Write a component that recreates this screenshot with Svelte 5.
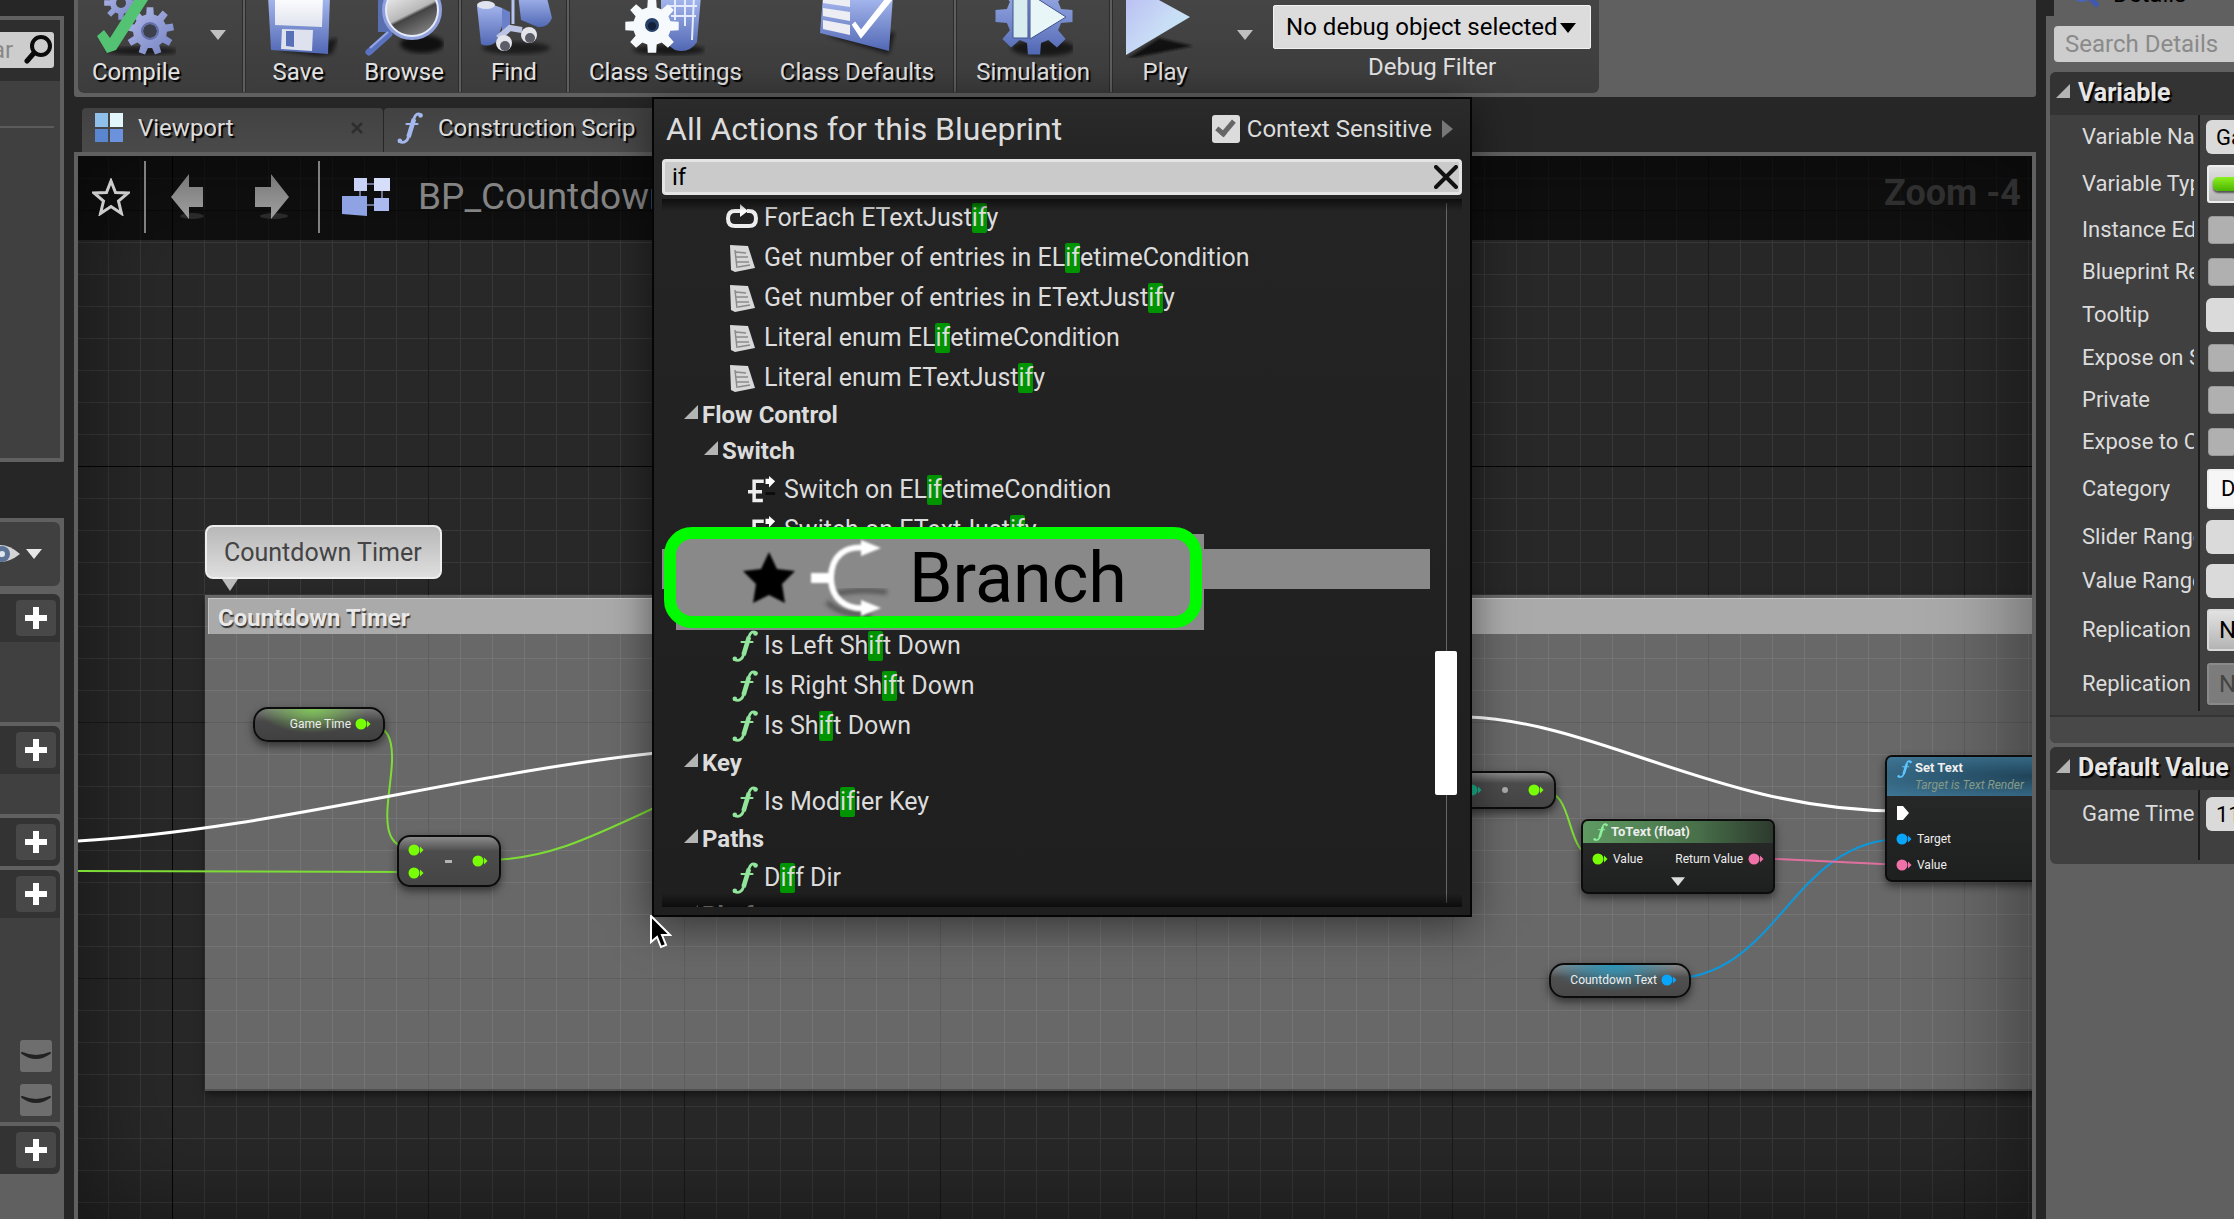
<script>
  let query = $state('if');
  let contextSensitive = $state(true);

  const sections = [
    { body: 80 },
    { body: 40 },
    { body: 0 },
    { body: 204, eyes: 2 },
    { body: 0 }
  ];

  const actions = [
    { kind: 'item', icon: 'loop', level: 2, text: ['ForEach ETextJust', 'y'] },
    { kind: 'item', icon: 'enum', level: 2, text: ['Get number of entries in EL', 'etimeCondition'] },
    { kind: 'item', icon: 'enum', level: 2, text: ['Get number of entries in ETextJust', 'y'] },
    { kind: 'item', icon: 'enum', level: 2, text: ['Literal enum EL', 'etimeCondition'] },
    { kind: 'item', icon: 'enum', level: 2, text: ['Literal enum ETextJust', 'y'] },
    { kind: 'group', level: 1, name: 'Flow Control' },
    { kind: 'group', level: 2, name: 'Switch' },
    { kind: 'item', icon: 'switch', level: 3, text: ['Switch on EL', 'etimeCondition'] },
    { kind: 'item', icon: 'switch', level: 3, text: ['Switch on ETextJust', 'y'] },
    { kind: 'selected' },
    { kind: 'item', icon: 'func', level: 2, text: ['Is Left Sh', 't Down'] },
    { kind: 'item', icon: 'func', level: 2, text: ['Is Right Sh', 't Down'] },
    { kind: 'item', icon: 'func', level: 2, text: ['Is Sh', 't Down'] },
    { kind: 'group', level: 1, name: 'Key' },
    { kind: 'item', icon: 'func', level: 2, text: ['Is Mod', 'ier Key'] },
    { kind: 'group', level: 1, name: 'Paths' },
    { kind: 'item', icon: 'func', level: 2, text: ['D', 'f Dir'] },
    { kind: 'group', level: 1, name: 'Platform' }
  ];

  const properties = [
    { id: 'var-name', label: 'Variable Name', type: 'text', value: 'Game Time', size: 'h44' },
    { id: 'var-type', label: 'Variable Type', type: 'pill', size: 'h50' },
    { id: 'instance', label: 'Instance Editable', type: 'check', size: 'h42' },
    { id: 'readonly', label: 'Blueprint Read Only', type: 'check', size: 'h42' },
    { id: 'tooltip', label: 'Tooltip', type: 'text', value: '', size: 'h44' },
    { id: 'spawn', label: 'Expose on Spawn', type: 'check', size: 'h42' },
    { id: 'private', label: 'Private', type: 'check', size: 'h42' },
    { id: 'cinematics', label: 'Expose to Cinematics', type: 'check', size: 'h42' },
    { id: 'category', label: 'Category', type: 'combo', value: 'Default', size: 'h52' },
    { id: 'slider', label: 'Slider Range', type: 'text', value: '', size: 'h44' },
    { id: 'range', label: 'Value Range', type: 'text', value: '', size: 'h44' },
    { id: 'replication', label: 'Replication', type: 'select', value: 'None', size: 'h54' },
    { id: 'condition', label: 'Replication Condition', type: 'select', value: 'None', size: 'h54', disabled: true }
  ];

  // Outline of a cog with n teeth between the inner and outer radius.
  function gear(cx, cy, inner, outer, n) {
    const pts = [];
    const step = (Math.PI * 2) / n;
    for (let i = 0; i < n; i++) {
      const a = i * step - Math.PI / 2;
      for (const [r, k] of [[inner, -0.32], [outer, -0.2], [outer, 0.2], [inner, 0.32]]) {
        pts.push(`${(cx + r * Math.cos(a + k * step)).toFixed(1)},${(cy + r * Math.sin(a + k * step)).toFixed(1)}`);
      }
    }
    return pts.join(' ');
  }
</script>

{#snippet func(cls)}
  <svg class={cls} viewBox="0 0 26 32" aria-hidden="true">
    <g fill="none" stroke="currentColor" stroke-linecap="round">
      <path d="M24 3C21 .8 18.300 2 17 6.500L11.500 25C10.200 29.500 6.500 31.500 2.500 29.500" stroke-width="2.800" />
      <path d="M17 7L11.500 25" stroke-width="4.600" stroke-linecap="butt" />
      <path d="M9.500 12H20.500" stroke-width="2.200" />
    </g>
    <circle cx="23.500" cy="3.500" r="2.300" fill="currentColor" />
    <circle cx="2.800" cy="28.800" r="2.300" fill="currentColor" />
  </svg>
{/snippet}

{#snippet pin(color)}
  <svg class="pin" viewBox="0 0 16 12" aria-hidden="true">
    <circle cx="6" cy="6" r="5.500" fill={color} />
    <path d="M12 2.500L15.500 6L12 9.500Z" fill={color} />
  </svg>
{/snippet}

{#snippet down(cls)}
  <svg class={cls} viewBox="0 0 16 10" aria-hidden="true"><path d="M0 0H16L8 10Z" fill="currentColor" /></svg>
{/snippet}

{#snippet expander()}
  <svg class="expander" viewBox="0 0 14 14" aria-hidden="true"><path d="M14 0V14H0Z" fill="#b4b4b4" /></svg>
{/snippet}

{#snippet property(p)}
  <div class="prop {p.size}">
    <label for={p.id}>{p.label}</label>
    <div class="value">
      {#if p.type === 'check'}
        <input id={p.id} type="checkbox" />
      {:else if p.type === 'pill'}
        <button id={p.id} class="type" aria-label="Float"><span></span></button>
      {:else if p.type === 'combo' || p.type === 'select'}
        <select id={p.id} class={p.type} disabled={p.disabled}><option>{p.value}</option></select>
      {:else}
        <input id={p.id} type="text" value={p.value} />
      {/if}
    </div>
  </div>
{/snippet}

<div class="app">
  <svg class="defs" aria-hidden="true">
    <defs>
      <linearGradient id="blue" x1="0" y1="0" x2="0" y2="1"><stop offset="0" stop-color="#a9baf0" /><stop offset="1" stop-color="#5168b4" /></linearGradient>
      <linearGradient id="steel" x1="0" y1="0" x2="1" y2="1"><stop offset="0" stop-color="#b3bbec" /><stop offset="1" stop-color="#7482c0" /></linearGradient>
      <linearGradient id="paper" x1="0" y1="0" x2="0" y2="1"><stop offset="0" stop-color="#fff" /><stop offset="1" stop-color="#dfe3ee" /></linearGradient>
      <linearGradient id="play" x1="0" y1="0" x2="1" y2="1"><stop offset="0" stop-color="#b8b9f2" /><stop offset=".6" stop-color="#c9def6" /><stop offset="1" stop-color="#bdeef0" /></linearGradient>
      <linearGradient id="lens" x1=".2" y1="0" x2=".7" y2="1"><stop offset="0" stop-color="#fff" /><stop offset=".55" stop-color="#b8b8b8" /><stop offset=".6" stop-color="#444" /><stop offset="1" stop-color="#888" /></linearGradient>
      <linearGradient id="arrow" x1="0" y1="0" x2="0" y2="1"><stop offset="0" stop-color="#777" /><stop offset="1" stop-color="#a0a0a0" /></linearGradient>
      <filter id="soft"><feGaussianBlur stdDeviation="2" /></filter>
      <filter id="glow"><feGaussianBlur stdDeviation="1" /></filter>
    </defs>
  </svg>

  <aside class="left">
    <div class="components">
      <div class="find">
        <div class="findbox">
          <span>ar</span>
          <svg viewBox="0 0 30 30" aria-hidden="true"><circle cx="17" cy="11" r="9" fill="none" stroke="#0b0b0b" stroke-width="4" /><path d="M10 18L3 26" stroke="#0b0b0b" stroke-width="5" stroke-linecap="round" /></svg>
        </div>
      </div>
      <hr />
    </div>
    <div class="members">
      <div class="viewopts">
        <svg class="eye" viewBox="0 0 40 24" aria-hidden="true"><path d="M0 12Q20 -6 40 12Q20 28 0 12Z" fill="#d5d5d5" /><circle cx="22" cy="12" r="8" fill="#5d7396" /><circle cx="22" cy="12" r="3" fill="#dfe6ee" /></svg>
        {@render down('caret light')}
      </div>
      {#each sections as s}
        <section class:open={s.body > 0}>
          <header>
            <button class="plus" aria-label="Add"><svg viewBox="0 0 22 22" aria-hidden="true"><path d="M11 0V22M0 11H22" stroke="#fff" stroke-width="6" /></svg></button>
          </header>
          {#if s.body}
            <div class="sbody" style="height:{s.body}px">
              {#each Array(s.eyes ?? 0) as _}
                <button class="lid" aria-label="Toggle visibility"><svg viewBox="0 0 32 32" aria-hidden="true"><path d="M2 13Q16 23 30 13Q16 19 2 13Z" fill="#222" stroke="#222" stroke-width="2" stroke-linejoin="round" /></svg></button>
              {/each}
            </div>
          {/if}
        </section>
      {/each}
    </div>
  </aside>

  <main>
    <div class="toolwrap">
      <div class="toolbar">
        <button class="tool">
          <svg viewBox="0 0 80 58" aria-hidden="true">
            <ellipse cx="46" cy="51" rx="36" ry="4" fill="#000" opacity=".6" filter="url(#soft)" />
            <polygon points={gear(25, 3, 11, 17, 8)} fill="url(#steel)" /><circle cx="25" cy="3" r="5" fill="#444" />
            <polygon points={gear(54, 31, 17, 24, 9)} fill="url(#steel)" /><circle cx="54" cy="31" r="7" fill="#3c3f4c" /><circle cx="54" cy="31" r="8" fill="none" stroke="#636ea8" stroke-width="2" />
            <path d="M1 36L8 30L14 38L42 -6L52 0L20 50L11 53Z" fill="#53c272" />
          </svg>
          <span>Compile</span>
        </button>
        <button class="drop" aria-label="Compile options">{@render down('caret')}</button>
        <i></i>
        <button class="tool">
          <svg viewBox="0 0 80 58" aria-hidden="true">
            <polygon points="20,50 80,38 74,54 60,56" fill="#000" opacity=".6" filter="url(#soft)" />
            <polygon points="10,-4 72,-4 70,54 13,50" fill="url(#blue)" />
            <polygon points="17,-4 65,-4 64,27 17,25" fill="url(#paper)" />
            <polygon points="24,29 55,30 54,51 23,49" fill="#dde2ee" />
            <polygon points="28,31 36,31 36,47 28,46" fill="#5870b8" />
          </svg>
          <span>Save</span>
        </button>
        <button class="tool">
          <svg viewBox="0 0 80 58" aria-hidden="true">
            <ellipse cx="58" cy="44" rx="22" ry="9" fill="#000" opacity=".75" filter="url(#soft)" />
            <rect x="14" y="-6" width="20" height="38" fill="#5a6fb0" />
            <path d="M25 34L5 52" stroke="#5a72c0" stroke-width="7" stroke-linecap="round" />
            <path d="M24 32L6 48" stroke="#94a7e4" stroke-width="2" />
            <circle cx="48" cy="10" r="28" fill="url(#lens)" stroke="#8fa0dc" stroke-width="4" />
            <circle cx="48" cy="10" r="26" fill="none" stroke="#e6ebfa" stroke-width="2" />
          </svg>
          <span>Browse</span>
        </button>
        <i></i>
        <button class="tool">
          <svg viewBox="0 0 80 58" aria-hidden="true">
            <ellipse cx="42" cy="48" rx="34" ry="6" fill="#000" opacity=".55" filter="url(#soft)" />
            <path d="M3 6Q8 1 14 3L28 8V26L22 42Q14 48 7 44Z" fill="url(#blue)" />
            <path d="M44 -6H72L78 18Q74 28 64 27L47 20Z" fill="url(#blue)" />
            <path d="M28 8L36 12V30L28 34Z" fill="#6a80c8" />
            <ellipse cx="12" cy="5" rx="9" ry="4" fill="#dfe4ee" />
            <path d="M39 -4V24" stroke="#b7c4f0" stroke-width="3" />
            <path d="M24 38L36 28L48 30" fill="none" stroke="#bcc6e4" stroke-width="6" />
            <circle cx="30" cy="43" r="8" fill="#e3e5ea" /><circle cx="31" cy="46" r="5" fill="#5b5e68" />
            <circle cx="55" cy="35" r="8" fill="#e3e5ea" /><circle cx="56" cy="38" r="5" fill="#5b5e68" />
          </svg>
          <span>Find</span>
        </button>
        <i></i>
        <button class="tool broad">
          <svg viewBox="0 0 80 58" aria-hidden="true">
            <ellipse cx="44" cy="50" rx="36" ry="5" fill="#000" opacity=".6" filter="url(#soft)" />
            <path d="M36 -4H76L72 42Q64 54 50 50L36 40Z" fill="url(#blue)" />
            <path d="M50 -4V20M60 -4V26M69 -4L67 40M44 6H72M46 16H71" stroke="#e5ecff" stroke-width="2" fill="none" />
            <polygon points={gear(27, 26, 19, 27, 8)} fill="#f7fafc" /><circle cx="27" cy="25" r="7" fill="#26406a" /><circle cx="27" cy="26" r="4" fill="#12203a" />
          </svg>
          <span>Class Settings</span>
        </button>
        <button class="tool broad">
          <svg viewBox="0 0 80 58" aria-hidden="true">
            <polygon points="10,36 78,32 72,54" fill="#000" opacity=".6" filter="url(#soft)" />
            <polygon points="6,-4 76,-4 72,51 3,33" fill="url(#blue)" />
            <path d="M6 -4H33V7L6 3ZM6 8L33 12V21L6 16ZM6 20L33 25V35L6 29Z" fill="#eceef4" />
            <path d="M38 23L44 31L70 -2L74 0L44 37L36 25Z" fill="#fff" stroke="#fff" stroke-width="2" />
          </svg>
          <span>Class Defaults</span>
        </button>
        <i></i>
        <button class="tool broad">
          <svg viewBox="0 0 80 58" aria-hidden="true">
            <ellipse cx="50" cy="48" rx="32" ry="8" fill="#000" opacity=".6" filter="url(#soft)" />
            <polygon points={gear(41, 16, 28, 39, 8)} fill="url(#blue)" />
            <path d="M20 -4H35V38H20Z" fill="#d7ecee" stroke="#41528e" stroke-width="1" />
            <path d="M37 -6L73 17L37 39Z" fill="#e9f6f7" stroke="#41528e" stroke-width="1" />
          </svg>
          <span>Simulation</span>
        </button>
        <i></i>
        <button class="tool">
          <svg viewBox="0 0 80 58" aria-hidden="true">
            <polygon points="2,59 68,46 34,38" fill="#111" opacity=".9" filter="url(#glow)" />
            <polygon points="1,-18 65,17 1,55" fill="url(#play)" />
          </svg>
          <span>Play</span>
        </button>
        <button class="drop wide" aria-label="Play options">{@render down('caret')}</button>
        <div class="filter">
          <div class="selectwrap">
            <select id="debug"><option>No debug object selected</option></select>
            {@render down('selcaret')}
          </div>
          <label for="debug">Debug Filter</label>
        </div>
      </div>
    </div>

    <nav class="tabs">
      <button class="tab first">
        <svg class="vp" viewBox="0 0 30 32" aria-hidden="true"><rect x="1" y="1" width="13" height="14" fill="#8fc0ea" /><rect x="16" y="1" width="13" height="14" fill="#e3f6fb" /><rect x="1" y="17" width="13" height="13" fill="#5a86d0" /><rect x="16" y="17" width="13" height="13" fill="#6d92dd" /></svg>
        <span>Viewport</span>
        <svg class="x" viewBox="0 0 12 12" aria-hidden="true"><path d="M1 1L11 11M11 1L1 11" stroke="#2e2e2e" stroke-width="2.500" /></svg>
      </button>
      <button class="tab second">
        {@render func('tabf')}
        <span>Construction Scrip</span>
      </button>
    </nav>

    <div class="graph">
      <div class="comment"><h2>Countdown Timer</h2></div>
      <div class="vignette"></div>
      <div class="bubble">Countdown Timer</div>

      <svg class="wires" aria-hidden="true">
        <g transform="translate(-78 -156)" fill="none" stroke-width="2">
          <g stroke="#7ddc35">
            <path d="M78 871L414 872" />
            <path d="M364 723C430 723 350 849 414 849" />
            <path d="M486 860C545 860 590 838 656 807" />
            <path d="M1538 789C1580 789 1560 858 1600 858" />
          </g>
          <path d="M1668 979C1780 979 1790 839 1902 839" stroke="#0c98dd" />
          <path d="M1756 858L1902 865" stroke="#e0719f" />
          <g stroke="#fff" stroke-width="3">
            <path d="M78 841C270 830 460 774 656 753" />
            <path d="M1468 717C1600 722 1720 811 1900 811" />
          </g>
        </g>
      </svg>

      <div class="node var gametime"><span>Game Time</span>{@render pin('#78ff05')}</div>
      <div class="node op minus">
        <div class="col">{@render pin('#78ff05')}{@render pin('#78ff05')}</div>
        <b class="dash"></b>
        {@render pin('#78ff05')}
      </div>
      <div class="node op times">{@render pin('#18b58c')}<b class="dot"></b>{@render pin('#78ff05')}</div>
      <div class="node var cdtext"><span>Countdown Text</span>{@render pin('#07a5fb')}</div>
      <div class="node call totext">
        <header>{@render func('nf green')}<strong>ToText (float)</strong></header>
        <div class="pins">{@render pin('#78ff05')}<span>Value</span><span class="right">Return Value</span>{@render pin('#f070a8')}</div>
        {@render down('more')}
      </div>
      <div class="node call settext">
        <header>{@render func('nf cyan')}<div><strong>Set Text</strong><em>Target is Text Render</em></div></header>
        <div class="pins"><svg class="exec" viewBox="0 0 14 14" aria-hidden="true"><path d="M1 0H7L13 7L7 14H1Z" fill="#fff" /></svg></div>
        <div class="pins">{@render pin('#07a5fb')}<span>Target</span></div>
        <div class="pins">{@render pin('#f070a8')}<span>Value</span></div>
      </div>

      <div class="titlebar">
        <button class="star" aria-label="Bookmark"><svg viewBox="0 0 38 38" aria-hidden="true"><path d="M19 3L23.500 14.500L36 15L26.500 23L29.500 35.500L19 28.500L8.500 35.500L11.500 23L2 15L14.500 14.500Z" fill="none" stroke="#ccc" stroke-width="3" /></svg></button>
        <i></i>
        <button class="nav" aria-label="Back"><svg viewBox="0 0 36 48" aria-hidden="true"><ellipse cx="22" cy="43" rx="12" ry="3" fill="#2a2a2a" /><path d="M1 24L19 1V14H33V34H19V46Z" fill="url(#arrow)" /></svg></button>
        <button class="nav" aria-label="Forward"><svg viewBox="0 0 36 48" aria-hidden="true"><ellipse cx="20" cy="43" rx="14" ry="3" fill="#2a2a2a" /><path d="M35 24L17 1V14H1V34H17V46Z" fill="url(#arrow)" /></svg></button>
        <i></i>
        <svg class="bp" viewBox="0 0 48 40" aria-hidden="true"><path d="M18 14V20M25 7H32M40 14V22M25 28H32" stroke="#6b7391" stroke-width="2" /><rect x="12" y="1" width="13" height="13" fill="#c9d3f8" /><rect x="32" y="1" width="16" height="13" fill="#d7defa" /><rect x="32" y="21" width="15" height="13" fill="#aab9ef" /><path d="M0 19H25V39L0 37Z" fill="#8fa3e4" /></svg>
        <span class="crumb">BP_Countdown</span>
        <span class="zoom">Zoom -4</span>
      </div>
    </div>
  </main>

  <aside class="details">
    <div class="dtab">
      <svg viewBox="0 0 30 30" aria-hidden="true"><circle cx="12" cy="12" r="10" fill="#ccd" stroke="#4a64b8" stroke-width="4" /><path d="M19 19L28 28" stroke="#3f59b0" stroke-width="5" /></svg>
      <span>Details</span>
    </div>
    <div class="dpanel">
      <input class="dsearch" type="text" placeholder="Search Details" aria-label="Search Details" />
      <section class="block">
        <h3>{@render expander()}Variable</h3>
        <div class="props clip">{#each properties as p}{@render property(p)}{/each}</div>
        <div class="advanced"></div>
      </section>
      <section class="block">
        <h3>{@render expander()}Default Value</h3>
        <div class="props">{@render property({ id: 'game-time', label: 'Game Time', type: 'text', value: '110.0', size: 'h74' })}</div>
      </section>
    </div>
  </aside>

  <div class="menu" role="dialog" aria-label="All Actions for this Blueprint">
    <div class="mhead">
      <h1>All Actions for this Blueprint</h1>
      <label class="ctx"><input type="checkbox" bind:checked={contextSensitive} /><span>Context Sensitive</span></label>
      <svg class="more-arrow" viewBox="0 0 11 18" aria-hidden="true"><path d="M0 0L11 9L0 18Z" fill="#777" /></svg>
    </div>
    <div class="msearch">
      <input type="text" aria-label="Search actions" bind:value={query} />
      <button aria-label="Clear search" onclick={() => (query = '')}><svg viewBox="0 0 24 24" aria-hidden="true"><path d="M2 2L22 22M22 2L2 22" stroke="#111" stroke-width="4" stroke-linecap="round" /></svg></button>
    </div>
    <div class="mbody">
      <ul>
        {#each actions as a}
          {#if a.kind === 'group'}
            <li class="group l{a.level}">{@render expander()}<span>{a.name}</span></li>
          {:else if a.kind === 'selected'}
            <li class="selected">
              <div class="callout">
                <svg class="bigstar" viewBox="0 0 54 54" aria-hidden="true"><path d="M27 1L35 18L53 20L40 33L43 52L27 44L11 52L14 33L1 20L19 18Z" fill="#000" filter="url(#glow)" /></svg>
                <svg class="branch" viewBox="0 0 78 76" aria-hidden="true">
                  <path d="M16 62Q30 76 60 74M24 54Q46 48 76 52" fill="none" stroke="#333" stroke-width="5" opacity=".6" filter="url(#soft)" />
                  <g filter="url(#glow)"><path d="M18 38H20M56 8C34 5 20 16 20 38C20 58 34 70 56 68" fill="none" stroke="#fff" stroke-width="6" /><path d="M0 38H18" stroke="#fff" stroke-width="10" /><path d="M50 0L70 8L50 16ZM50 60L70 68L50 76Z" fill="#fff" /></g>
                </svg>
                <span>Branch</span>
              </div>
            </li>
          {:else}
            <li class="item l{a.level}">
              {#if a.icon === 'func'}
                {@render func('lf')}
              {:else if a.icon === 'loop'}
                <svg class="li" viewBox="0 0 32 28" aria-hidden="true"><path d="M12 7H9Q2 7 2 14.500T9 22H23Q30 22 30 14.500T23 7H21" fill="none" stroke="#eee" stroke-width="4" /><path d="M12 7H17" stroke="#eee" stroke-width="4" /><path d="M14 0L22 7L14 13Z" fill="#fff" /></svg>
              {:else if a.icon === 'enum'}
                <svg class="li" viewBox="0 0 32 28" aria-hidden="true"><path d="M4 1L22 2L29 24L9 28L5 26Z" fill="#d8d8d8" /><path d="M10 8L20 9M10 13L22 13M11 18L23 18M12 23L24 21M9 6L11 24" stroke="#8a8a8a" stroke-width="1.500" fill="none" /></svg>
              {:else}
                <svg class="li" viewBox="0 0 32 32" aria-hidden="true"><path d="M0 18H16M18 6H7V28H17" fill="none" stroke="#eee" stroke-width="4" /><path d="M20 3H24V0L31 6L24 13V9H20Z" fill="#fff" /><path d="M20 20H31" stroke="#0a0a0a" stroke-width="3" /></svg>
              {/if}
              <span>{a.text[0]}<mark>if</mark>{a.text[1]}</span>
            </li>
          {/if}
        {/each}
      </ul>
      <div class="scroll"><div class="thumb"></div></div>
    </div>
    <svg class="cursor" viewBox="0 0 22 34" aria-hidden="true"><path d="M1 1V27L7 22L11 32L16 30L12 20H20Z" fill="#000" stroke="#fff" stroke-width="2" /></svg>
  </div>
</div>

<style>
  :global(body) {
    background: #262626;
    overflow: hidden;
  }
  .app {
    position: relative;
    display: grid;
    grid-template-columns: 64px minmax(0, 1fr) 188px;
    column-gap: 10px;
    height: 100vh;
    overflow: hidden;
    background: #262626;
    color: #dcdcdc;
    font: 24px/28px Roboto, 'Liberation Sans', sans-serif;
    font-variant-ligatures: none;
  }
  .defs {
    position: absolute;
    width: 0;
    height: 0;
  }
  button, input, select {
    font: inherit;
    color: inherit;
    border: 0;
    padding: 0;
    margin: 0;
    background: none;
    box-sizing: border-box;
    appearance: none;
    border-radius: 0;
  }
  svg { display: block; flex: none; }
  h1, h2, h3, ul { margin: 0; padding: 0; font-size: 24px; }

  /* left column */
  .left { display: flex; flex-direction: column; overflow: hidden; }
  .components {
    margin-top: 16px;
    height: 446px;
    box-sizing: border-box;
    border: solid #606060;
    border-width: 4px 4px 4px 0;
    background: #404040;
    border-radius: 0 0 2px 0;
  }
  .find {
    height: 61px;
    box-sizing: border-box;
    padding: 12px 6px 0 0;
    background: #2e2e2e;
  }
  .findbox {
    display: flex;
    align-items: center;
    height: 36px;
    background: #cdcdcd;
    color: #888;
    border-radius: 0 3px 3px 0;
    overflow: hidden;
  }
  .findbox span { flex: 1; margin-left: -8px; }
  .findbox svg { width: 30px; height: 30px; }
  .components hr { border: 0; height: 2px; background: #5c5c5c; margin: 45px 6px 0 0; }
  .members {
    flex: 1;
    margin-top: 56px;
    padding: 4px 4px 0 0;
    background: #606060;
    display: flex;
    flex-direction: column;
    gap: 4px;
  }
  .viewopts {
    height: 64px;
    margin-bottom: 4px;
    background: #404040;
    border-radius: 0 6px 6px 0;
    display: flex;
    align-items: center;
    gap: 6px;
  }
  .eye { width: 40px; height: 24px; margin-left: -20px; }
  .members section header {
    height: 48px;
    background: #333;
    border-radius: 0 6px 6px 0;
    display: flex;
    align-items: center;
    justify-content: flex-end;
    padding-right: 4px;
  }
  .members section.open header { border-radius: 0 6px 0 0; }
  .plus {
    width: 40px;
    height: 36px;
    background: #484848;
    border-radius: 4px;
    display: grid;
    place-items: center;
  }
  .plus svg { width: 22px; height: 22px; }
  .sbody {
    background: #404040;
    box-sizing: border-box;
    display: flex;
    flex-direction: column;
    justify-content: flex-end;
    align-items: flex-end;
    gap: 12px;
    padding: 0 8px 6px 0;
  }
  .lid { width: 32px; height: 32px; background: #6e6e6e; border-radius: 3px; }

  /* toolbar */
  main { display: flex; flex-direction: column; min-width: 0; }
  .toolwrap {
    background: #606060;
    padding: 0 4px 4px;
    border-radius: 0 0 3px 3px;
    display: flex;
  }
  .toolbar {
    display: flex;
    height: 93px;
    padding-right: 8px;
    background: linear-gradient(#454545, #3c3c3c);
    border-radius: 0 0 6px 6px;
    white-space: nowrap;
    color: #e2e2e2;
  }
  .toolbar i {
    width: 2px;
    margin-bottom: 1px;
    background: #5e5e5e;
    border: solid #2c2c2c;
    border-width: 0 1px;
  }
  .tool {
    display: flex;
    flex-direction: column;
    align-items: center;
    padding: 0 14px 6px;
    min-width: 104px;
  }
  .tool.broad { padding: 0 19px 6px; }
  .tool svg { width: 80px; height: 58px; margin: 0 -4px; }
  .tool span { text-shadow: 2px 2px 1px #000; }
  .drop { width: 48px; padding-top: 30px; display: flex; justify-content: center; }
  .drop.wide { width: 56px; }
  .caret { width: 16px; height: 10px; color: #c0c0c0; }
  .caret.light { color: #e8e8e8; }
  .filter { padding-top: 5px; display: flex; flex-direction: column; align-items: center; gap: 4px; }
  .selectwrap { position: relative; }
  .selectwrap select {
    width: 318px;
    height: 44px;
    padding: 0 12px;
    background: #dcdcdc;
    color: #000;
    border: 1px solid #f2f2f2;
    border-radius: 2px;
  }
  .selcaret { position: absolute; right: 15px; top: 18px; width: 16px; height: 10px; color: #000; pointer-events: none; }
  .filter label { line-height: 28px; }

  /* document tabs */
  .tabs { display: flex; gap: 1px; height: 44px; padding: 11px 0 0 8px; }
  .tab {
    display: flex;
    align-items: center;
    background: linear-gradient(#424242, #4a4a4a);
    border-radius: 4px 4px 0 0;
    padding: 0 20px 5px 12px;
    gap: 14px;
    text-shadow: 2px 2px 1px #000;
    white-space: nowrap;
  }
  .first { width: 301px; }
  .first span { flex: 1; text-align: left; }
  .vp { width: 30px; height: 32px; }
  .x { width: 12px; height: 12px; }
  .second { width: 301px; }
  .tabf { width: 28px; height: 32px; color: #a4b8ee; }

  /* graph */
  .graph {
    position: relative;
    flex: 1;
    border: 4px solid #606060;
    border-bottom: 0;
    overflow: hidden;
    background-color: #282828;
    background-image:
      linear-gradient(#050505, #050505),
      linear-gradient(#050505, #050505),
      linear-gradient(90deg, #191919 1px, transparent 1px),
      linear-gradient(#191919 1px, transparent 1px),
      linear-gradient(90deg, #383838 1px, transparent 1px),
      linear-gradient(#383838 1px, transparent 1px);
    background-size: 1px 100%, 100% 1px, 256px 256px, 256px 256px, 32px 32px, 32px 32px;
    background-position: 94px 0, 0 310px, 94px 0, 0 54px, 30px 0, 0 22px;
    background-repeat: no-repeat, no-repeat, repeat, repeat, repeat, repeat;
  }
  .vignette {
    position: absolute;
    inset: 0;
    box-shadow: inset 0 0 100px rgba(0, 0, 0, 0.5);
  }
  .wires { position: absolute; inset: 0; width: 100%; height: 100%; }
  .comment {
    position: absolute;
    left: 127px;
    right: -20px;
    top: 439px;
    height: 496px;
    box-sizing: border-box;
    padding: 3px;
    background: rgba(255, 255, 255, 0.3);
    border-bottom: 2px solid #505050;
    box-shadow: 0 4px 8px rgba(0, 0, 0, 0.5);
  }
  .comment h2 {
    height: 36px;
    box-sizing: border-box;
    padding-left: 9px;
    line-height: 38px;
    background: #aaa;
    border: solid #c4c4c4;
    border-width: 1px 0 0 1px;
    color: #e9e9e9;
    text-shadow: 1px 2px 1px #333;
  }
  .bubble {
    position: absolute;
    left: 127px;
    top: 369px;
    height: 54px;
    box-sizing: border-box;
    padding: 0 18px 0 17px;
    border: 2px solid #eee;
    border-radius: 8px;
    background: linear-gradient(#b8b8b8, #dedede);
    color: #444;
    font-size: 25px;
    line-height: 52px;
    white-space: nowrap;
  }
  .bubble::after {
    content: '';
    position: absolute;
    left: 15px;
    top: 52px;
    border: solid transparent;
    border-width: 12px 8px 0;
    border-top-color: #bbb;
  }
  .node {
    position: absolute;
    box-sizing: border-box;
    border: 2px solid #0c0c0c;
    box-shadow: 0 4px 8px rgba(0, 0, 0, 0.5);
    color: #eee;
    font-size: 12px;
    line-height: 16px;
    white-space: nowrap;
  }
  .pin { width: 16px; height: 12px; }
  .var, .op {
    display: flex;
    align-items: center;
    background: linear-gradient(#8a8a8a, #4c4c4c 30%, #454545);
  }
  .var { height: 35px; border-radius: 15px; justify-content: flex-end; gap: 4px; padding: 0 12px 2px 0; }
  .gametime { left: 175px; top: 551px; width: 132px; background: radial-gradient(ellipse at 45% 0, #7fc458 0, transparent 55%), linear-gradient(#777, #484848 40%, #404040); }
  .cdtext { left: 1471px; top: 807px; width: 142px; background: radial-gradient(ellipse at 45% 0, #2a93b8 0, transparent 60%), linear-gradient(#888, #505050 40%, #484848); }
  .op { border-radius: 13px; justify-content: space-between; }
  .minus { left: 319px; top: 679px; width: 104px; height: 52px; padding: 0 11px 0 9px; }
  .col { display: flex; flex-direction: column; gap: 11px; }
  .dash { width: 7px; height: 3px; background: #b4b4b4; }
  .times { left: 1350px; top: 615px; width: 128px; height: 38px; padding: 0 10px 0 36px; }
  .dot { width: 6px; height: 6px; border-radius: 50%; background: #aaa; }
  .call { border-radius: 7px; background: linear-gradient(#2a2b2a, #1e201f); overflow: hidden; }
  .call header { display: flex; gap: 3px; padding-left: 10px; box-sizing: border-box; }
  .call strong { font-size: 13px; display: block; }
  .call em { display: block; color: #869a86; }
  .nf { width: 15px; height: 18px; }
  .green { color: #8cf09c; }
  .cyan { color: #5cc4ff; }
  .totext { left: 1503px; top: 663px; width: 194px; height: 75px; }
  .totext header { height: 22px; align-items: center; background: linear-gradient(90deg, #5f9a62 0, #48704a 60%, #2d3a2e); }
  .pins { display: flex; align-items: center; gap: 5px; padding: 0 9px; }
  .totext .pins { height: 31px; }
  .right { margin-left: auto; }
  .more { width: 14px; height: 9px; margin: 3px auto 0; color: #ddd; }
  .settext { left: 1807px; top: 599px; width: 300px; height: 127px; }
  .settext header { height: 39px; padding-top: 3px; background: radial-gradient(ellipse at 50% 50%, #1f4358, #3f7796); }
  .settext em { margin-top: 1px; }
  .settext .pins { height: 26px; }
  .settext .pins:nth-child(2) { margin-top: 4px; }
  .exec { width: 14px; height: 14px; }

  .titlebar {
    position: absolute;
    inset: 0 0 auto;
    height: 84px;
    display: flex;
    align-items: center;
    background: rgba(0, 0, 0, 0.6);
    padding: 0 11px 2px 14px;
    box-sizing: border-box;
    white-space: nowrap;
  }
  .titlebar i { width: 2px; height: 72px; background: #808080; margin-left: 14px; }
  .star svg { width: 38px; height: 38px; }
  .nav { width: 84px; display: grid; place-items: center; }
  .nav svg { width: 36px; height: 48px; }
  .titlebar i ~ i { margin-left: 4px; }
  .bp { width: 48px; height: 40px; margin: 0 28px 0 22px; }
  .crumb { font-size: 37px; line-height: 42px; color: #848484; }
  .zoom { margin-left: auto; font-size: 36px; line-height: 42px; font-weight: 700; color: #2f2f2f; padding-bottom: 8px; }

  /* details */
  .details { display: flex; flex-direction: column; overflow: hidden; white-space: nowrap; }
  .dtab {
    height: 16px;
    flex: none;
    box-sizing: border-box;
    margin-left: 8px;
    padding: 0 0 8px 16px;
    background: #606060;
    display: flex;
    align-items: flex-end;
    gap: 13px;
    color: #000;
    overflow: hidden;
  }
  .dtab svg { width: 30px; height: 30px; }
  .dpanel { flex: 1; background: #606060; padding: 10px 0 0 4px; }
  .dsearch {
    display: block;
    width: 200px;
    height: 36px;
    margin: 0 0 10px 4px;
    padding: 0 11px;
    background: #cdcdcd;
    border-radius: 4px;
    color: #222;
  }
  .dsearch::placeholder { color: #8a8a8a; opacity: 1; }
  .block { border-radius: 6px 0 0 6px; overflow: hidden; margin-bottom: 4px; background: #404040; }
  .block h3 {
    display: flex;
    align-items: center;
    gap: 8px;
    height: 43px;
    box-sizing: border-box;
    padding: 0 0 1px 6px;
    background: #333;
    color: #e6e6e6;
    font-size: 25px;
    text-shadow: 2px 2px 1px #000;
  }
  .expander { width: 14px; height: 14px; margin-bottom: 5px; }
  .prop { display: grid; grid-template-columns: 148px 160px; font-size: 22px; }
  .prop label {
    overflow: hidden;
    padding-left: 32px;
    align-self: center;
    line-height: 28px;
  }
  .clip .prop label { margin-right: 4px; }
  .value { border-left: 2px solid #1c1c1c; padding-left: 6px; display: flex; align-items: center; color: #000; }
  .h42 { height: 42px; }
  .h44 { height: 44px; }
  .h50 { height: 50px; }
  .h52 { height: 52px; }
  .h54 { height: 54px; }
  .h74 { grid-template-rows: 48px 22px 4px; }
  .h74 .value { grid-row: 1 / 3; padding-bottom: 22px; grid-column: 2; }
  .value input[type='text'] { width: 140px; height: 34px; background: #dadada; border-radius: 6px; padding: 0 10px; }
  .value input[type='checkbox'] { width: 28px; height: 28px; margin-left: 2px; background: #b0b0b0; border-radius: 4px; border: 1px solid #999; }
  .value select, .type { width: 140px; margin-left: 1px; border: 2px solid #ededed; border-radius: 3px; padding: 0 11px; background: linear-gradient(#e2e2e2, #b4b4b4); }
  .value .combo { height: 40px; background: #f6f6f6; padding: 0 12px; }
  .value .select { height: 42px; font-size: 24px; padding: 0 10px; border-color: #d8d8d8; }
  .value .select:disabled { background: #7c7c7c; border-color: #8a8a8a; color: #444; opacity: 1; }
  .type { height: 38px; padding: 0 4px; }
  .type span { display: block; width: 60px; height: 14px; border-radius: 5px; background: linear-gradient(#8cf020, #4bb400); box-shadow: 0 2px 2px #555; }
  .advanced { height: 26px; margin-top: 4px; background: #484848; border-top: 2px solid #343434; }

  /* action menu */
  .menu {
    position: absolute;
    left: 652px;
    top: 97px;
    width: 820px;
    box-sizing: border-box;
    border: 2px solid #050505;
    padding: 0 8px 8px;
    background: linear-gradient(#2b2b2b, #242424 60px, #1f1f1f);
    box-shadow: 0 8px 40px rgba(0, 0, 0, 0.5);
    white-space: nowrap;
  }
  .mhead { display: flex; align-items: center; height: 60px; padding: 0 9px 0 4px; }
  .mhead h1 { flex: 1; font-size: 32px; line-height: 38px; font-weight: 400; }
  .ctx { display: flex; align-items: center; gap: 7px; }
  .ctx input { width: 28px; height: 28px; background: #dcdcdc; border-radius: 3px; display: grid; place-items: center; }
  .ctx input:checked::before {
    content: '';
    width: 6px;
    height: 14px;
    border: solid #666;
    border-width: 0 5px 5px 0;
    transform: rotate(40deg);
    margin-bottom: 5px;
  }
  .more-arrow { width: 11px; height: 18px; margin-left: 10px; }
  .msearch {
    display: flex;
    align-items: center;
    height: 36px;
    box-sizing: border-box;
    background: #cacaca;
    border: 3px solid #e4e4e4;
    border-radius: 4px;
    padding-right: 1px;
    margin-bottom: 2px;
  }
  .msearch input { flex: 1; height: 30px; padding: 0 7px; color: #000; outline: 0; }
  .msearch svg { width: 24px; height: 24px; }
  .mbody {
    position: relative;
    display: grid;
    grid-template-columns: 1fr 32px;
    height: 710px;
  }
  .mbody::before, .mbody::after {
    content: '';
    position: absolute;
    left: 0;
    right: 0;
    height: 12px;
    pointer-events: none;
  }
  .mbody::before { top: 2px; background: linear-gradient(rgba(0, 0, 0, 0.6), transparent); }
  .mbody::after { bottom: 0; height: 14px; background: linear-gradient(transparent, rgba(0, 0, 0, 0.6)); }
  ul { list-style: none; height: 710px; overflow: hidden; min-width: 0; }
  li { display: flex; align-items: center; }
  .item { height: 40px; box-sizing: border-box; padding-top: 1px; font-size: 25px; }
  .item svg { margin-right: 6px; }
  .item.l2 { padding-left: 64px; }
  .item.l3 { padding-left: 84px; }
  .li { width: 32px; height: 28px; }
  .lf { width: 26px; height: 32px; padding-left: 6px; color: #92e69c; }
  .group { height: 36px; box-sizing: border-box; padding-bottom: 1px; gap: 4px; font-weight: 700; }
  .group.l1 { padding-left: 22px; }
  .group.l2 { padding-left: 42px; }
  mark { display: inline-block; line-height: 30px; background: #009400; color: inherit; border-radius: 2px; }
  .selected { position: relative; z-index: 0; height: 40px; margin-bottom: 36px; background: #898989; }
  .callout {
    position: absolute;
    left: 2px;
    top: -22px;
    width: 538px;
    height: 101px;
    box-sizing: border-box;
    display: flex;
    align-items: center;
    padding-left: 66px;
    border: 12px solid #00fb00;
    border-radius: 28px;
    color: #000;
    font-size: 70px;
    line-height: 76px;
  }
  .callout::before {
    content: '';
    position: absolute;
    z-index: -1;
    left: 0;
    right: -14px;
    top: -5px;
    bottom: -14px;
    background: #898989;
  }
  .bigstar { width: 54px; height: 54px; }
  .branch { width: 78px; height: 76px; margin: 0 20px 0 15px; overflow: visible; }
  .scroll {
    display: grid;
    grid-template-rows: 454fr 144fr 112fr;
    justify-items: center;
    background: linear-gradient(#666, #666) 16px 6px / 1px 700px no-repeat;
  }
  .thumb { grid-row: 2; width: 22px; background: #fff; border-radius: 2px; }
  .cursor { position: absolute; left: -4px; bottom: -34px; width: 22px; height: 34px; }
</style>
